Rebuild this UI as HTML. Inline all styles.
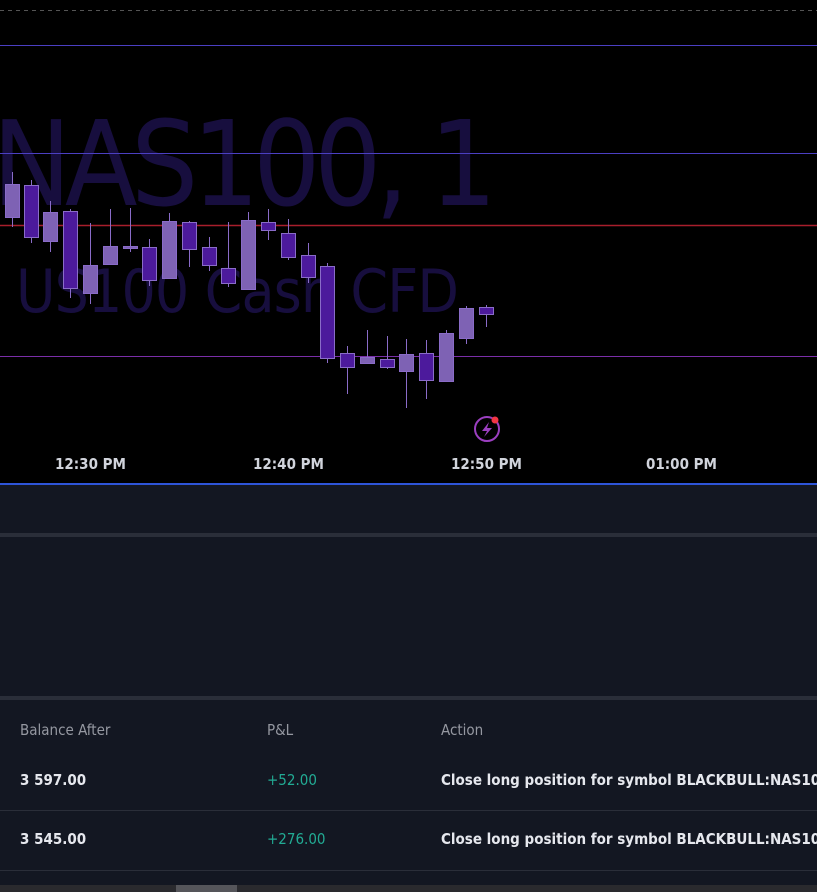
<!DOCTYPE html>
<html><head><style>
body{margin:0;width:817px;height:892px;background:#131722;overflow:hidden;font-family:"DejaVu Sans Condensed","Liberation Sans",sans-serif;position:relative}
.a{position:absolute}
.t{color:#d1d4dc;font-size:15px;font-weight:bold;top:455px}
.tb{font-size:15px;color:#e6e8ee;position:absolute;font-weight:bold}
.h{font-weight:normal;color:#9598a1}
</style></head><body>
<div class="a" style="left:0;top:0;width:817px;height:483px;background:#000"></div>
<svg class="a" style="left:0;top:0" width="817" height="483">
<line x1="0" y1="10.5" x2="817" y2="10.5" stroke="#555" stroke-dasharray="4,4"/>
<text x="-8" y="205" font-family="DejaVu Sans Condensed, Liberation Sans, sans-serif" font-size="118" fill="#170e3e" textLength="505">NAS100, 1</text>
<text x="16" y="312" font-family="DejaVu Sans Condensed, Liberation Sans, sans-serif" font-size="60" fill="#170e3e" textLength="443">US100 Cash CFD</text>
<line x1="0" y1="45.5" x2="817" y2="45.5" stroke="#4b3fc2"/>
<line x1="0" y1="153.5" x2="817" y2="153.5" stroke="#4b3fc2"/>
<line x1="0" y1="225.5" x2="817" y2="225.5" stroke="#a81e2c" stroke-width="1.5"/>
<line x1="0" y1="356.5" x2="817" y2="356.5" stroke="#7a2ea8"/>
<circle cx="487" cy="429" r="12" fill="none" stroke="#9b3fc0" stroke-width="2"/>
<path d="M489 422 L482 431 L487 431 L484 437 L492 428 L487 428 Z" fill="#9b3fc0"/>
<circle cx="495" cy="420" r="3.5" fill="#f23645"/>
</svg>
<svg class="a" style="left:0;top:0" width="817" height="483" id="cs"></svg>
<div class="a t" style="left:55px">12:30 PM</div>
<div class="a t" style="left:253px">12:40 PM</div>
<div class="a t" style="left:451px">12:50 PM</div>
<div class="a t" style="left:646px">01:00 PM</div>
<div class="a" style="left:0;top:483px;width:817px;height:2px;background:#2e55d8"></div>
<div class="a" style="left:0;top:533px;width:817px;height:4px;background:#2a2e39"></div>
<div class="a" style="left:0;top:696px;width:817px;height:4px;background:#2a2e39"></div>
<div class="tb h" style="left:20px;top:721px">Balance After</div>
<div class="tb h" style="left:267px;top:721px">P&amp;L</div>
<div class="tb h" style="left:441px;top:721px">Action</div>
<div class="tb" style="left:20px;top:771px">3 597.00</div>
<div class="tb" style="left:267px;top:771px;color:#22ab94;font-weight:normal">+52.00</div>
<div class="tb" style="left:441px;top:771px;white-space:nowrap">Close long position for symbol BLACKBULL:NAS100</div>
<div class="a" style="left:0;top:810px;width:817px;height:1px;background:#2a2e39"></div>
<div class="tb" style="left:20px;top:830px">3 545.00</div>
<div class="tb" style="left:267px;top:830px;color:#22ab94;font-weight:normal">+276.00</div>
<div class="tb" style="left:441px;top:830px;white-space:nowrap">Close long position for symbol BLACKBULL:NAS100</div>
<div class="a" style="left:0;top:870px;width:817px;height:1px;background:#2a2e39"></div>
<div class="a" style="left:0;top:885px;width:817px;height:7px;background:#2a2a2e"></div>
<div class="a" style="left:176px;top:885px;width:61px;height:7px;background:#55555a"></div>
<script>
var d=[[12,184,217,172,227,1],[31,185,237,180,243,0],[50,212,241,201,252,1],[70,211,288,209,298,0],[90,265,293,223,304,1],[110,246,264,209,265,1],[130,246,248,208,252,1],[149,247,280,239,286,0],[169,221,278,213,279,1],[189,222,249,221,267,0],[209,247,265,237,271,0],[228,268,283,222,287,0],[248,220,289,212,289,1],[268,222,230,209,240,0],[288,233,257,219,260,0],[308,255,277,243,283,0],[327,266,358,263,363,0],[347,353,367,346,394,0],[367,357,363,330,364,1],[387,359,367,336,369,0],[406,354,371,339,408,1],[426,353,380,340,399,0],[446,333,381,330,381,1],[466,308,338,306,344,1],[486,307,314,305,327,0]];
var s='';d.forEach(function(c){var f=c[5]?'#7e62b4':'#4c1a9c';s+='<line x1="'+(c[0]+.5)+'" y1="'+c[3]+'" x2="'+(c[0]+.5)+'" y2="'+c[4]+'" stroke="#8a6cc8"/><rect x="'+(c[0]-6.5)+'" y="'+(c[1]+.5)+'" width="14" height="'+Math.max(1,c[2]-c[1])+'" fill="'+f+'" stroke="#8a6cc8"/>';});
document.getElementById('cs').innerHTML=s;
</script>
</body></html>
